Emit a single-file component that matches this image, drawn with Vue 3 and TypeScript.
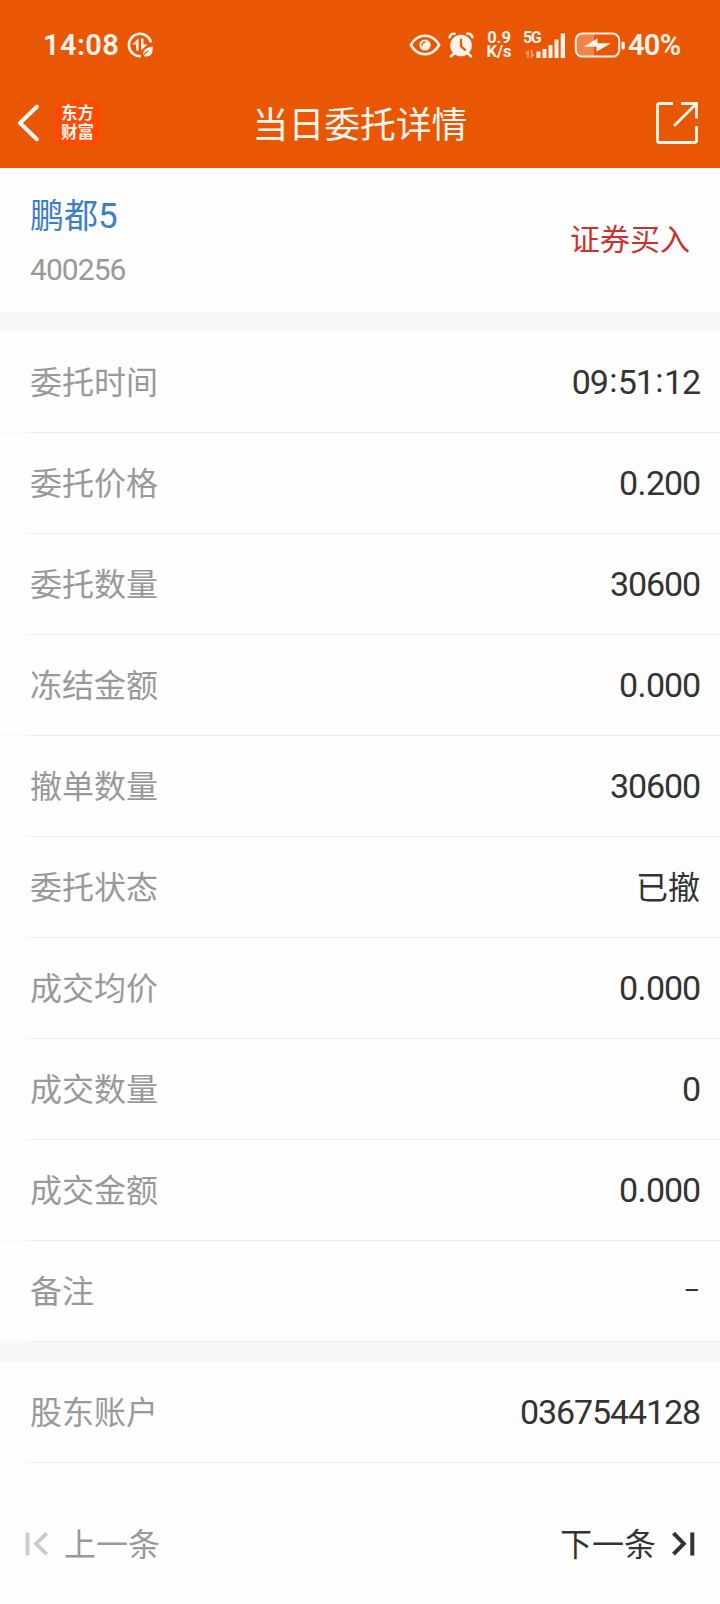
<script setup lang="ts">
interface Row {
  label: string
  value: string
  cjk?: boolean
  dash?: boolean
}

const orderRows: Row[] = [
  { label: '委托时间', value: '09:51:12' },
  { label: '委托价格', value: '0.200' },
  { label: '委托数量', value: '30600' },
  { label: '冻结金额', value: '0.000' },
  { label: '撤单数量', value: '30600' },
  { label: '委托状态', value: '已撤', cjk: true },
  { label: '成交均价', value: '0.000' },
  { label: '成交数量', value: '0' },
  { label: '成交金额', value: '0.000' },
  { label: '备注', value: '–', dash: true },
]

const accountRows: Row[] = [{ label: '股东账户', value: '0367544128' }]

const sections: Row[][] = [orderRows, accountRows]

// Splits a value so that its separators can be spaced apart from the digits.
const pieces = (value: string): string[] => value.split(/([:.])/)
const pieceClass = (piece: string): string =>
  piece === ':' ? 'colon' : piece === '.' ? 'point' : 'digits'
</script>

<template>
  <div class="page">
    <header class="top">
      <div class="status">
        <div class="status-side">
          <span class="clock">14:08</span>
          <svg class="saver" width="28" height="28" viewBox="0 0 28 28">
            <path d="M25 11.5A11.2 11.2 0 1 0 15 25.2" fill="none" stroke="#fff3ea" stroke-width="2.6" />
            <path d="M12.6 7.500v12h-2.600v-6H6zM15 19.500V7.500h2.400v6h4.200z" fill="#fff3ea" />
            <path d="M26.6 15.6c.6 6-1.4 10-6 10-1.6 0-2.6-.5-3.300-1.200-.9-5 3-7.800 9.300-8.800z" fill="#fff3ea" />
            <path d="M16 26.200c1.600-3.200 3.500-4.900 6.800-6.500" fill="none" stroke="#ea5704" stroke-width="1.200" />
          </svg>
        </div>
        <div class="status-side">
          <svg class="eye" width="32" height="24" viewBox="0 0 32 24">
            <path d="M1.800 12C5.500 5.500 10.400 2.800 16 2.800S26.500 5.500 30.200 12C26.500 18.500 21.600 21.200 16 21.200S5.500 18.500 1.800 12z" fill="none" stroke="#fff3ea" stroke-width="2.600" stroke-linejoin="round" />
            <circle cx="16" cy="12" r="5.600" fill="#fff3ea" />
            <path d="M13 12.500a3.200 3.200 0 0 1 3-3.500" fill="none" stroke="#ea5704" stroke-width="1.400" stroke-linecap="round" />
          </svg>
          <svg class="alarm" width="26" height="26" viewBox="0 0 26 26">
            <circle cx="13" cy="13.500" r="10.800" fill="#fff3ea" />
            <path d="M1.600 5.200C2.200 3 4.200 1.600 6.500 1.800M24.400 5.200C23.800 3 21.800 1.600 19.500 1.800M6 21.500l-3 2.800M20 21.500l3 2.800" fill="none" stroke="#fff3ea" stroke-width="2.600" stroke-linecap="round" />
            <path d="M13 7.500v6.800l4 3.600" fill="none" stroke="#ea5704" stroke-width="2.200" stroke-linecap="round" />
          </svg>
          <div class="speed"><span>0.9</span><span>K/s</span></div>
          <div class="signal">
            <span class="net">5G</span>
            <svg width="44" height="28" viewBox="0 0 44 28">
              <path d="M5.800 19v8H4.200v-4.500H1.500zM7.800 27v-8h1.600v4.500h2.700z" fill="#fff3ea" opacity=".5" />
              <path d="M13.500 20.500h4v6.500h-4zM19.500 18h4v9h-4zM25.500 14h4v13h-4zM31.500 8.500h4v18.500h-4zM37.700 2.500h4.300v24.500h-4.300z" fill="#fff3ea" />
            </svg>
          </div>
          <svg class="battery" width="52" height="28" viewBox="0 0 52 28">
            <path d="M9 3H20V25H9Q3 25 3 19V9Q3 3 9 3z" fill="#f08549" />
            <rect x="1.800" y="2.600" width="43.400" height="23" rx="6.500" fill="none" stroke="#fff3ea" stroke-width="2" />
            <rect x="47.500" y="10.500" width="3.300" height="8" rx="1.500" fill="#fff3ea" />
            <path d="M23.500 7.300V12.300H37L22.500 20.800V15.800H10z" fill="#fff3ea" />
          </svg>
          <span class="percent">40%</span>
        </div>
      </div>
      <nav class="nav">
        <div class="nav-left">
          <svg width="24" height="38" viewBox="0 0 24 38">
            <path d="M20.800 2.700 4 19 20.800 35.300" fill="none" stroke="#fff7ef" stroke-width="4" stroke-linecap="round" stroke-linejoin="round" />
          </svg>
          <div class="logo"><span>东方</span><span>财富</span></div>
        </div>
        <h1 class="title">当日委托详情</h1>
        <svg class="share" width="44" height="44" viewBox="0 0 44 44">
          <path d="M18 2.500H4.500Q2.500 2.500 2.500 4.500V39.500Q2.500 41.500 4.500 41.500H39.500Q41.500 41.500 41.500 39.500V25M26 2.500H41.500V17.500M41 3 19 25" fill="none" stroke="#fff7ef" stroke-width="2.800" />
        </svg>
      </nav>
    </header>

    <section class="stock">
      <div class="stock-id">
        <div class="stock-name">鹏都<span class="stock-digit">5</span></div>
        <div class="stock-code">400256</div>
      </div>
      <div class="side">证券买入</div>
    </section>

    <section v-for="(rows, i) in sections" :key="i" class="group">
      <div v-for="row in rows" :key="row.label" class="row">
        <span class="label">{{ row.label }}</span>
        <span class="value" :class="{ cjk: row.cjk, dash: row.dash }"><span v-for="(piece, n) in pieces(row.value)" :key="n" :class="pieceClass(piece)">{{ piece }}</span></span>
      </div>
    </section>

    <footer class="pager">
      <div class="page-link prev">
        <svg width="24" height="26" viewBox="0 0 24 26">
          <path d="M3.500 1.500v23M22.800 2.200 12 12.700l10.800 10.500" fill="none" stroke="#ccc" stroke-width="3.900" />
        </svg>
        <span>上一条</span>
      </div>
      <div class="page-link next">
        <span>下一条</span>
        <svg width="24" height="26" viewBox="0 0 24 26">
          <path d="M20.300 1.500v23M1.500 2.200 11.800 12.700 1.500 23.200" fill="none" stroke="#333" stroke-width="4" />
        </svg>
      </div>
    </footer>
  </div>
</template>

<style>
body {
  background: #fefefe;
}
</style>

<style scoped>
.page {
  width: 720px;
  height: 1604px;
  display: flex;
  flex-direction: column;
  overflow: hidden;
  background: #fefefe;
  font-family: "Noto Sans CJK SC", sans-serif;
  color: #333;
}
.top {
  height: 168px;
  flex: none;
  background: #ea5704;
  color: #fff3ea;
}
.status {
  height: 80px;
  padding: 9px 38px 0 43px;
  box-sizing: border-box;
  display: flex;
  justify-content: space-between;
  font-family: Roboto, sans-serif;
}
.status-side {
  display: flex;
  align-items: center;
}
.clock,
.percent {
  font-size: 29px;
  font-weight: 600;
  line-height: 34px;
}
.clock {
  letter-spacing: 0.4px;
}
.percent {
  width: 54px;
  margin-left: 2px;
  white-space: nowrap;
  letter-spacing: -0.700px;
}
.saver {
  margin-left: 7px;
}
.alarm {
  margin-left: 7px;
  margin-right: 1px;
}
.speed {
  width: 28px;
  margin-left: 10px;
  display: flex;
  flex-direction: column;
  align-items: center;
  font-size: 16.500px;
  font-weight: 700;
  line-height: 14px;
}
.signal {
  position: relative;
  width: 44px;
  height: 28px;
  margin-left: 10px;
}
.net {
  position: absolute;
  left: 0;
  top: 0;
  font-size: 16px;
  line-height: 14px;
  font-weight: 700;
  letter-spacing: -1.500px;
}
.battery {
  margin-left: 7px;
}
.nav {
  height: 88px;
  padding: 0 21px 3px 16px;
  box-sizing: border-box;
  display: grid;
  grid-template-columns: 1fr auto 1fr;
  align-items: center;
}
.nav-left {
  display: flex;
  align-items: center;
  gap: 15px;
}
.logo {
  width: 45px;
  height: 46px;
  border-radius: 9px;
  background: #ff4a04;
  display: flex;
  flex-direction: column;
  align-items: center;
  justify-content: center;
  padding-bottom: 1px;
  box-sizing: border-box;
  font-size: 16.500px;
  line-height: 19px;
  font-weight: 700;
}
.title {
  margin: 0 -5px 2px 0;
  font-size: 35.800px;
  line-height: 50px;
  font-weight: 400;
  color: #fff7ef;
}
.share {
  justify-self: end;
}
.stock {
  height: 144px;
  flex: none;
  padding: 0 30px 2px;
  box-sizing: border-box;
  display: flex;
  justify-content: space-between;
  align-items: center;
}
.stock-name {
  font-size: 34px;
  line-height: 50px;
  color: #3d7dcc;
}
.stock-digit {
  font-family: Roboto, sans-serif;
  font-size: 35px;
  letter-spacing: -1px;
}
.stock-code {
  margin-top: 8px;
  font-family: Roboto, sans-serif;
  font-size: 30px;
  line-height: 40px;
  letter-spacing: -0.950px;
  color: #999;
}
.side {
  margin-bottom: 5px;
  font-size: 30px;
  line-height: 44px;
  color: #d22f2d;
}
.group {
  flex: none;
  border-top: 20px solid #f7f8fa;
}
.row {
  height: 101px;
  padding: 0 20px 1px 30px;
  box-sizing: border-box;
  display: flex;
  justify-content: space-between;
  align-items: center;
  background: linear-gradient(#ebebeb, #ebebeb) 30px 100% / 100% 1px no-repeat,
    linear-gradient(#f8f8f8, #f8f8f8) 0 100% / 100% 1px no-repeat;
}
.group:nth-of-type(2) .row:last-child {
  background: linear-gradient(#ebebeb, #ebebeb) 30px 100% / 100% 1px no-repeat,
    linear-gradient(#f7f8fa, #f7f8fa) 0 100% / 100% 1px no-repeat;
}
.label {
  margin-bottom: 5px;
  font-size: 32px;
  line-height: 46px;
  color: #999;
}
.value {
  font-family: Roboto, sans-serif;
  font-size: 34px;
  line-height: 46px;
  letter-spacing: -1.100px;
}
.value.cjk {
  margin-bottom: 5px;
  font-family: "Noto Sans CJK SC", sans-serif;
  font-size: 32px;
  letter-spacing: 0;
}
.value.dash {
  padding-right: 1px;
  font-size: 25px;
}
.colon {
  position: relative;
  top: -2px;
  padding: 0 1.500px;
}
.point {
  padding: 0 0.600px;
}
.pager {
  flex: 1;
  padding: 20px 24px 0;
  display: flex;
  justify-content: space-between;
  align-items: center;
}
.page-link {
  display: flex;
  align-items: center;
  font-size: 32px;
  line-height: 46px;
}
.page-link span {
  margin-bottom: 4px;
}
.prev {
  gap: 16px;
  color: #999;
}
.next {
  gap: 16px;
}
</style>
